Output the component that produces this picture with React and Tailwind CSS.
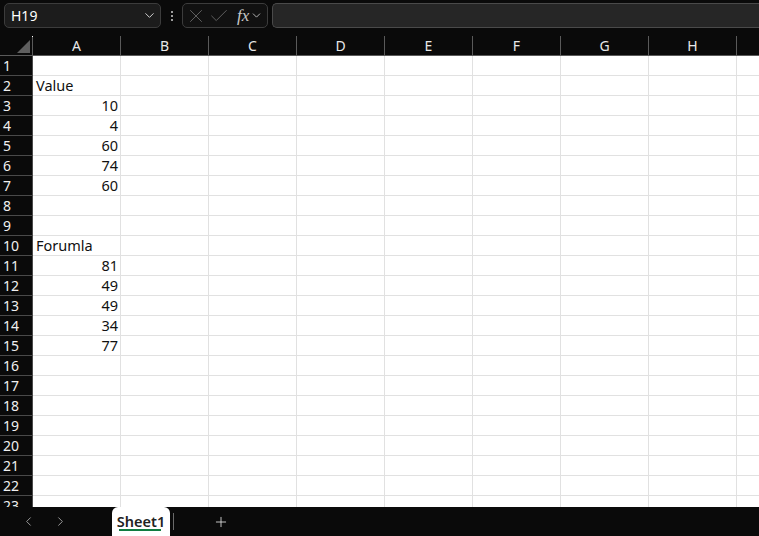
import { ChevronDown, ChevronLeft, ChevronRight, Plus, X, Check } from 'lucide-react'

const COLS = ['A', 'B', 'C', 'D', 'E', 'F', 'G', 'H', '']
const CELLS = {
  2: { text: 'Value', align: 'left' },
  3: { text: '10' },
  4: { text: '4' },
  5: { text: '60' },
  6: { text: '74' },
  7: { text: '60' },
  10: { text: 'Forumla', align: 'left' },
  11: { text: '81' },
  12: { text: '49' },
  13: { text: '49' },
  14: { text: '34' },
  15: { text: '77' },
}

const font = { fontFamily: '"Noto Sans", "Liberation Sans", sans-serif' }

function Toolbar() {
  return (
    <div className="h-[36px] flex items-start pt-[3px] pl-[4px] shrink-0">
      <div className="w-[157px] h-[25px] rounded-[5px] border border-[#3c3c3c] bg-[#1c1c1c] flex items-center justify-between pl-[6px] pr-[3px]">
        <span className="text-[14px] text-white leading-none">H19</span>
        <ChevronDown size={15} strokeWidth={1.6} className="text-[#d0d0d0]" />
      </div>
      <div className="w-[21px] h-[25px] flex flex-col items-center justify-center gap-[2px]">
        <span className="w-[2px] h-[2px] bg-[#cfcfcf] rounded-full" />
        <span className="w-[2px] h-[2px] bg-[#cfcfcf] rounded-full" />
        <span className="w-[2px] h-[2px] bg-[#cfcfcf] rounded-full" />
      </div>
      <div className="w-[86px] h-[25px] rounded-[5px] border border-[#3c3c3c] bg-[#111111] flex items-center pl-[2px] pr-[2px]">
        <X size={22} strokeWidth={0.9} className="text-[#6e6e6e]" />
        <Check size={22} strokeWidth={0.9} className="text-[#6e6e6e] ml-[1px]" />
        <span className="ml-[7px] text-[17px] italic text-[#c8c8c8] leading-none" style={{ fontFamily: '"Liberation Serif", serif' }}>fx</span>
        <ChevronDown size={13} strokeWidth={1.6} className="text-[#c8c8c8] ml-[1px]" />
      </div>
      <div className="ml-[4px] flex-1 h-[25px] rounded-l-[5px] border border-r-0 border-[#4a4a4a] bg-[#262626]" />
    </div>
  )
}

function HeaderRow() {
  return (
    <div className="flex h-[20px] shrink-0 border-b border-[#5a5a5a]">
      <div className="w-[33px] shrink-0 relative border-r border-[#5a5a5a]">
        <svg className="absolute left-[17px] top-[4px]" width="13" height="13" viewBox="0 0 13 13">
          <polygon points="13,0 13,13 0,13" fill="#5f5f5f" />
        </svg>
        <span className="absolute right-[-1px] top-0 w-[1px] h-[1px] bg-white" />
      </div>
      {COLS.map((c, i) => (
        <div
          key={i}
          className="w-[88px] shrink-0 border-r border-[#5a5a5a] flex items-center justify-center text-[14px] text-[#e8e8e8]"
        >
          {c}
        </div>
      ))}
    </div>
  )
}

function Row({ n }) {
  const cell = CELLS[n]
  return (
    <div className="flex h-[20px] shrink-0">
      <div className="w-[33px] shrink-0 border-b border-r border-[#4a4a4a] bg-[#0a0a0a] pl-[3px] flex items-center text-[14px] text-[#f0f0f0]">
        {n}
      </div>
      {COLS.map((c, i) => (
        <div
          key={i}
          className={`w-[88px] shrink-0 bg-white border-b border-r border-[#e1e1e1] flex items-center pl-[3px] pr-[2px] text-[14.5px] text-[#111] ${
            cell && cell.align === 'left' ? 'justify-start' : 'justify-end'
          }`}
        >
          {i === 0 && cell ? cell.text : ''}
        </div>
      ))}
    </div>
  )
}

function SheetTabs() {
  return (
    <div className="h-[29px] shrink-0 bg-[#0a0a0a] flex items-stretch">
      <div className="flex items-center pl-[21px] gap-[17px] w-[112px]">
        <ChevronLeft size={15} strokeWidth={1.5} className="text-[#a0a0a0]" />
        <ChevronRight size={15} strokeWidth={1.5} className="text-[#a0a0a0]" />
      </div>
      <div className="w-[58px] bg-white rounded-t-[6px] flex flex-col items-center justify-center relative">
        <span className="text-[14.5px] font-semibold text-[#222] leading-none mt-[-1px]">Sheet1</span>
        <span className="absolute bottom-[5px] left-[7px] right-[9px] h-[2px] bg-[#107c41]" />
      </div>
      <div className="flex items-center">
        <span className="ml-[3px] w-[1px] h-[17px] bg-[#6a6a6a]" />
        <Plus size={16} strokeWidth={1.3} className="ml-[39px] text-[#e0e0e0]" />
      </div>
    </div>
  )
}

export default function App() {
  const rows = Array.from({ length: 23 }, (_, i) => i + 1)
  return (
    <div className="w-[759px] h-[536px] bg-[#0a0a0a] flex flex-col overflow-hidden" style={font}>
      <Toolbar />
      <div className="flex-1 overflow-hidden flex flex-col">
        <HeaderRow />
        {rows.map((n) => (
          <Row key={n} n={n} />
        ))}
      </div>
      <SheetTabs />
    </div>
  )
}
